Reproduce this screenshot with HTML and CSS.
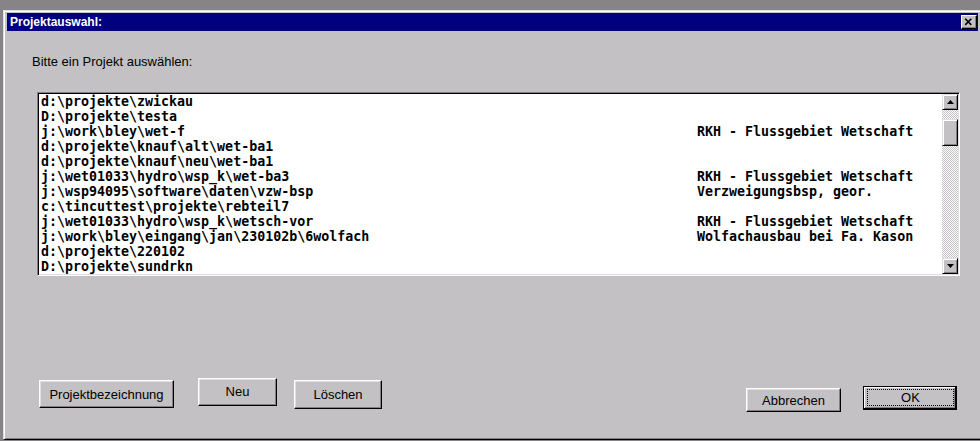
FILE: index.html
```html
<!DOCTYPE html>
<html lang="de">
<head>
<meta charset="utf-8">
<title>Projektauswahl</title>
<link rel="stylesheet" href="styles.css">
</head>
<body>
<div class="dialog">
  <div class="titlebar">
    <span class="title">Projektauswahl:</span>
    <span class="close">
      <svg width="16" height="14" viewBox="0 0 16 14"><path d="M4.5 3.5 L11 10 M11 3.5 L4.5 10" stroke="#000" stroke-width="1.7" fill="none"/></svg>
    </span>
  </div>
  <div class="client">
    <div class="prompt">Bitte ein Projekt auswählen:</div>
    <div class="listbox">
      <div class="items">
        <div class="row"><span class="path">d:\projekte\zwickau</span><span class="desc"></span></div>
        <div class="row"><span class="path">D:\projekte\testa</span><span class="desc"></span></div>
        <div class="row"><span class="path">j:\work\bley\wet-f</span><span class="desc">RKH - Flussgebiet Wetschaft</span></div>
        <div class="row"><span class="path">d:\projekte\knauf\alt\wet-ba1</span><span class="desc"></span></div>
        <div class="row"><span class="path">d:\projekte\knauf\neu\wet-ba1</span><span class="desc"></span></div>
        <div class="row"><span class="path">j:\wet01033\hydro\wsp_k\wet-ba3</span><span class="desc">RKH - Flussgebiet Wetschaft</span></div>
        <div class="row"><span class="path">j:\wsp94095\software\daten\vzw-bsp</span><span class="desc">Verzweigungsbsp, geor.</span></div>
        <div class="row"><span class="path">c:\tincuttest\projekte\rebteil7</span><span class="desc"></span></div>
        <div class="row"><span class="path">j:\wet01033\hydro\wsp_k\wetsch-vor</span><span class="desc">RKH - Flussgebiet Wetschaft</span></div>
        <div class="row"><span class="path">j:\work\bley\eingang\jan\230102b\6wolfach</span><span class="desc">Wolfachausbau bei Fa. Kason</span></div>
        <div class="row"><span class="path">d:\projekte\220102</span><span class="desc"></span></div>
        <div class="row"><span class="path">D:\projekte\sundrkn</span><span class="desc"></span></div>
      </div>
      <div class="scrollbar">
        <span class="sbtn"><svg width="7" height="4" viewBox="0 0 7 4"><polygon points="3.5,0 7,4 0,4" fill="#000"/></svg></span>
        <div class="track">
          <span class="thumb"></span>
        </div>
        <span class="sbtn"><svg width="7" height="4" viewBox="0 0 7 4"><polygon points="0,0 7,0 3.5,4" fill="#000"/></svg></span>
      </div>
    </div>
    <div class="footer">
      <span class="btn btn-proj">Projektbezeichnung</span>
      <span class="btn btn-neu">Neu</span>
      <span class="btn btn-del">Löschen</span>
      <span class="btn btn-cancel">Abbrechen</span>
      <span class="btn btn-ok"><span class="focus">OK</span></span>
    </div>
  </div>
</div>
</body>
</html>
```
FILE: styles.css
```css
html, body {
  margin: 0;
  padding: 0;
  background: #868486;
  overflow: hidden;
  height: 441px;
}

.dialog {
  box-sizing: border-box;
  margin: 10px 0 0 3px;
  width: 979px;
  height: 430px;
  background: #c3c1c3;
  border: 1px solid;
  border-color: #dfdfdf #000 #000 #dfdfdf;
  box-shadow: inset 1px 1px #fff, inset -1px -1px #808080;
  padding: 2px 3px 3px 3px;
  display: flex;
  flex-direction: column;
  font-family: "Liberation Sans", Arial, sans-serif;
  font-size: 13px;
  color: #000;
}

.titlebar {
  height: 18px;
  background: #000080;
  display: flex;
  align-items: center;
  justify-content: space-between;
  padding: 0 1px 0 3px;
  box-sizing: border-box;
}

.title {
  color: #fff;
  font-weight: bold;
  font-size: 12px;
  line-height: 18px;
}

.close {
  box-sizing: border-box;
  width: 16px;
  height: 14px;
  background: #c3c1c3;
  border: 1px solid;
  border-color: #fff #000 #000 #fff;
  box-shadow: inset -1px -1px #808080;
  display: flex;
  align-items: center;
  justify-content: center;
}

.close svg {
  display: block;
  margin: -1px 0 0 -1px;
}

.client {
  display: flex;
  flex-direction: column;
}

.prompt {
  margin-top: 24px;
  padding-left: 25px;
  line-height: 14px;
}

.listbox {
  box-sizing: border-box;
  margin-top: 23px;
  margin-left: 30px;
  width: 923px;
  height: 184px;
  background: #fff;
  border: 1px solid;
  border-color: #808080 #fff #fff #808080;
  box-shadow: inset 1px 1px #000, inset -1px -1px #dfdfdf;
  padding: 1px;
  display: flex;
}

.items {
  flex: 1;
  padding-left: 2px;
  overflow: hidden;
  font-family: "DejaVu Sans Mono", "Liberation Mono", monospace;
  font-weight: bold;
  font-size: 13.3px;
  line-height: 15px;
  white-space: nowrap;
}

.row {
  display: grid;
  grid-template-columns: 656px auto;
  height: 15px;
}

.scrollbar {
  width: 16px;
  display: flex;
  flex-direction: column;
}

.sbtn {
  box-sizing: border-box;
  width: 16px;
  height: 16px;
  background: #c3c1c3;
  border: 1px solid;
  border-color: #dfdfdf #000 #000 #dfdfdf;
  box-shadow: inset 1px 1px #fff, inset -1px -1px #808080;
  display: flex;
  align-items: center;
  justify-content: center;
}

.sbtn svg {
  display: block;
}

.track {
  flex: 1;
  background-image: conic-gradient(#fff 25%, #c3c1c3 0 50%, #fff 0 75%, #c3c1c3 0);
  background-size: 2px 2px;
  padding-top: 9px;
}

.thumb {
  display: block;
  box-sizing: border-box;
  width: 16px;
  height: 27px;
  background: #c3c1c3;
  border: 1px solid;
  border-color: #dfdfdf #000 #000 #dfdfdf;
  box-shadow: inset 1px 1px #fff, inset -1px -1px #808080;
}

.footer {
  display: flex;
  align-items: flex-start;
  margin-top: 102px;
  padding-left: 32px;
}

.btn {
  box-sizing: border-box;
  display: flex;
  align-items: center;
  justify-content: center;
  background: #c3c1c3;
  border: 1px solid;
  border-color: #fff #000 #000 #fff;
  box-shadow: inset -1px -1px #808080, inset 1px 1px #dfdfdf;
  font-size: 13px;
  line-height: 15px;
}

.btn-proj {
  width: 135px;
  height: 28px;
  margin-top: 2px;
}

.btn-neu {
  width: 79px;
  height: 28px;
  margin-left: 24px;
  padding-bottom: 2px;
}

.btn-del {
  width: 88px;
  height: 29px;
  margin-left: 17px;
  margin-top: 2px;
}

.btn-cancel {
  width: 95px;
  height: 24px;
  margin-left: 364px;
  margin-top: 10px;
}

.btn-ok {
  width: 94px;
  height: 24px;
  margin-left: 22px;
  margin-top: 8px;
  border: 1px solid #000;
  box-shadow: inset -1px -1px #000, inset 1px 1px #fff, inset -2px -2px #808080;
  padding: 2px 2px 3px 3px;
  align-items: stretch;
}

.focus {
  flex: 1;
  display: flex;
  align-items: center;
  justify-content: center;
  border: 1px dotted #000;
}
```
